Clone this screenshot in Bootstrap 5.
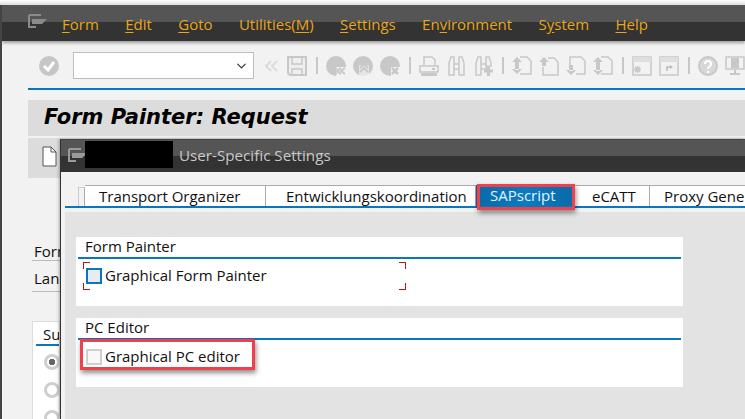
<!DOCTYPE html>
<html lang="en">
<head>
<meta charset="utf-8">
<title>Form Painter: Request</title>
<link href="https://cdn.jsdelivr.net/npm/bootstrap@5.3.0/dist/css/bootstrap.min.css" rel="stylesheet">
<style>
html,body{margin:0;height:100%;background:#fff;overflow:hidden}
body{font-family:"Open Sans","Noto Sans",sans-serif;font-size:15px;color:#111;line-height:1.2}
.desk{position:relative;width:745px;height:419px;overflow:hidden;background:#f2f2f2;padding-top:5px}
.desk-edge{position:absolute;left:0;top:5px;width:2px;height:414px;background:#444}
.desk-top{position:absolute;left:0;top:0;width:745px;height:5px;background:linear-gradient(#fff,#ddd)}
.sap-title{height:36px;background:linear-gradient(#555 0,#555 48%,#333 48%,#333 100%);box-shadow:0 2px 3px rgba(0,0,0,.35);padding-left:26px;margin-left:2px}
.sap-menu{gap:26.4px;color:#e8a61c;margin-left:15px;padding-top:1px}
.sap-menu u{text-underline-offset:2px}
.win-ico{width:19px;height:14px;margin-top:-4px;flex:none}
.tool-row{height:47px;padding-left:39px;padding-top:2px}
.tool-row svg{flex:none;display:block}
.tool-select.form-select{width:181px;height:27px;border-radius:0;border:1px solid #bdbdbd;padding:0;background-position:right 5px center;background-size:13px 10px;margin:0 11px 0 14px;box-shadow:none}
.tool-sep{width:2px;height:17px;background:#c8c8c8;flex:none;margin:0 8px 0 9px}
.blue-rule{height:2px;background:#0a77bd;margin-left:28px}
.page-head{height:36px;margin:10px 0 0 28px;background:#dcdcdc;padding-left:16px;font:italic 700 21px "DejaVu Sans",sans-serif;color:#000;line-height:34px}
.page-tools{height:40px;margin:2px 0 0 28px;background:#dcdcdc;padding:8px 0 0 14px}
.field-lab{margin-left:32px;width:28px;overflow:hidden;white-space:nowrap;border-bottom:1px solid #bbb;padding-left:2px}
.sub-panel{margin:29px 0 0 32px;width:28px;height:100px;background:#fff;overflow:hidden;padding:3px 0 0 3px;border:1px solid #ddd}
.sub-panel div.sub-lab{border-bottom:2px solid #0a77bd;white-space:nowrap;height:21px;padding-left:7px}
.radio-dot{display:block;width:16px;height:16px;border-radius:50%;border:3px solid #cfcfcf;background:#fff;margin:0 0 12px 8px}
.radio-on{background:radial-gradient(circle,#666 0,#666 3px,#fff 3.5px)}
.sap-dialog{position:absolute;left:60px;top:139px;width:685px;height:280px;background:#f2f2f2;border-left:1px solid #333;box-shadow:-1px 0 3px rgba(0,0,0,.3)}
.dlg-title{height:33px;background:linear-gradient(#555 0,#555 50%,#333 50%,#333 100%);border-top:1px solid #444;color:#c9c9c9;font-size:15.2px;padding-left:7px;padding-bottom:2px}
.mask-block{width:88px;height:27px;background:#000;margin:-1px 6px 0 -2px;flex:none}
.dlg-tabs{height:38px;padding:13px 0 0 17px}
.tab-strip.nav{flex-wrap:nowrap;height:23px;border-bottom:2px solid #0a77bd;margin-left:-13px;padding-left:13px;white-space:nowrap;width:684px;overflow:hidden}
.tab-item{height:21px;background:#fff;border-top:1px solid #aaa;border-right:1px solid #aaa;color:#111;font-size:15px;line-height:20px;flex:none}
.tab-stack{width:7px;border-top:1px solid #ccc;background:transparent;border-left:1px solid #ccc;border-right:1px solid #aaa;margin-top:2px;height:19px}
.tab-a{width:181px;padding-left:14px}
.tab-b{width:210px;padding-left:20px}
.tab-c{width:99px;padding-left:14px;background:linear-gradient(90deg,#0a6aa8,#0a7cc0 50%,#0a6aa8);color:#e6f2fa;border:0;height:23px;margin-top:-1px;line-height:23px}
.tab-d{width:75px;padding-left:17px}
.tab-e{width:100px;padding-left:14px;border-right:0}
.dlg-body{position:relative;background:#e3e3e3;margin:2px 0 0 4px;height:207px;padding:25px 0 0 11px}
.grp-box{position:relative;width:607px;height:69px;background:#fff;margin-bottom:12px;padding:2px 2px 0}
.grp-head{height:20px;border-bottom:2px solid #0a77bd;padding-left:7px;line-height:15px;font-size:15px}
.grp-line{padding:8px 0 0 8px;line-height:17px;font-size:15px}
.chk{width:16px;height:16px;flex:none;background:#f8f8f8;border:2px solid #cfcfcf;margin-right:3px}
.chk-focus{background:#e8ecf0;border-color:#0a77bd}
.crop{position:absolute;width:7px;height:7px;border:0 solid #c4121a}
.crop-tl{left:7px;top:25px;border-top-width:1px;border-left-width:1px}
.crop-tr{left:323px;top:25px;border-top-width:1px;border-right-width:1px}
.crop-bl{left:7px;top:46px;border-bottom-width:1px;border-left-width:1px}
.crop-br{left:323px;top:46px;border-bottom-width:1px;border-right-width:1px}
.hilite{position:absolute;border:3px solid #f0404c;box-shadow:1px 3px 5px rgba(0,0,0,.45);pointer-events:none}
.hilite-tab{left:416px;top:45px;width:98px;height:26px}
.hilite-pc{left:19px;top:200px;width:175px;height:31px}
</style>
</head>
<body>
<svg width="0" height="0" class="position-absolute">
<defs>
<symbol id="i-win" viewBox="0 0 19 14"><path d="M1 1h12M1 1v12h7M1 13" fill="none" stroke="currentColor" stroke-width="2"/><path d="M4 5h15l-5 5H4z" fill="currentColor"/></symbol>
</defs>
</svg>
<div class="desk">
  <div class="desk-top"></div>
  <div class="desk-edge"></div>
  <div class="sap-title d-flex align-items-center">
    <svg class="win-ico" width="19" height="14" style="color:#8a8a8a"><use href="#i-win"/></svg>
    <div class="sap-menu d-flex">
      <span><u>F</u>orm</span><span><u>E</u>dit</span><span><u>G</u>oto</span><span>Utilities(<u>M</u>)</span><span><u>S</u>ettings</span><span>En<u>v</u>ironment</span><span>S<u>y</u>stem</span><span><u>H</u>elp</span>
    </div>
  </div>
  <div class="tool-row d-flex align-items-center">
    <svg width="20" height="20" viewBox="0 0 20 20"><circle cx="10" cy="10" r="10" fill="#c6c6c6"/><path d="M5 10l4 4 6-8" fill="none" stroke="#fff" stroke-width="3"/></svg>
    <select class="form-select tool-select" aria-label="Command"><option></option></select>
    <svg width="13" height="12" viewBox="0 0 13 12" style="margin-right:9px"><path d="M6 1L1 6l5 5M12 1L7 6l5 5" fill="none" stroke="#dcdcdc" stroke-width="2"/></svg>
    <svg width="20" height="20" viewBox="0 0 20 20"><path d="M1 1h18v18H3l-2-2z" fill="#efefef" stroke="#c8c8c8" stroke-width="2"/><path d="M5 2v6h10V2M5 19v-6h10v6" fill="none" stroke="#c8c8c8" stroke-width="1.500"/></svg>
    <i class="tool-sep"></i>
    <svg width="20" height="20" viewBox="0 0 20 20"><circle cx="10" cy="10" r="10" fill="#c8c8c8"/><path d="M10 11h10v9H10z" fill="#f2f2f2"/><path d="M11 12l-4 3 4 3M15 12l-4 3 4 3M19 12l-4 3 4 3" fill="none" stroke="#c8c8c8" stroke-width="2"/></svg>
    <svg width="20" height="20" viewBox="0 0 20 20" style="margin-left:7px"><circle cx="10" cy="10" r="10" fill="#c8c8c8"/><path d="M6 9h10v11H6z" fill="#f2f2f2" opacity=".7"/><path d="M7 12l4-4 4 4M7 16l4-4 4 4" fill="none" stroke="#c8c8c8" stroke-width="2"/></svg>
    <svg width="20" height="20" viewBox="0 0 20 20" style="margin-left:7px"><circle cx="10" cy="10" r="10" fill="#c8c8c8"/><path d="M11 11h9v9h-9z" fill="#f2f2f2"/><path d="M12 12l6 6M18 12l-6 6" fill="none" stroke="#c8c8c8" stroke-width="2.500"/></svg>
    <i class="tool-sep"></i>
    <svg width="20" height="20" viewBox="0 0 20 20"><path d="M5 9V1h8l3 3v5" fill="#f2f2f2" stroke="#c8c8c8" stroke-width="1.500"/><path d="M1 10h18v6H1z" fill="#f2f2f2" stroke="#c8c8c8" stroke-width="1.500"/><path d="M2 18.500h16" stroke="#c8c8c8" stroke-width="3"/><path d="M13 13h3" stroke="#c8c8c8" stroke-width="2"/></svg>
    <svg width="19" height="20" viewBox="0 0 19 20" style="margin-left:8px"><path d="M2 19V7l2-6h3v18zM12 19V1h3l2 6v12zM7 8h5v5H7z" fill="#f2f2f2" stroke="#c8c8c8" stroke-width="1.500"/></svg>
    <svg width="19" height="20" viewBox="0 0 19 20" style="margin-left:8px"><path d="M2 19V7l2-6h3v18zM12 10V1h3l2 6v3zM7 8h5v5H7z" fill="#f2f2f2" stroke="#c8c8c8" stroke-width="1.500"/><path d="M10 15h9M14.500 11v9" stroke="#c8c8c8" stroke-width="3"/></svg>
    <i class="tool-sep"></i>
    <svg width="20" height="20" viewBox="0 0 20 20"><path d="M8 1h7l4 4v13H8" fill="#f2f2f2" stroke="#c8c8c8" stroke-width="1.500"/><path d="M0 6l5-5 5 5zM0 13l5 5 5-5zM3 5h4v9H3z" fill="#c8c8c8"/></svg>
    <svg width="20" height="20" viewBox="0 0 20 20" style="margin-left:7px"><path d="M9 2h6l4 4v13H4v-8" fill="#f2f2f2" stroke="#c8c8c8" stroke-width="1.500"/><path d="M0 6l5-5 5 5zM3 5h4v5H3z" fill="#c8c8c8"/></svg>
    <svg width="20" height="20" viewBox="0 0 20 20" style="margin-left:7px"><path d="M4 9V1h11l4 4v13h-9" fill="#f2f2f2" stroke="#c8c8c8" stroke-width="1.500"/><path d="M0 14l5 5 5-5zM3 9h4v6H3z" fill="#c8c8c8"/></svg>
    <svg width="20" height="20" viewBox="0 0 20 20" style="margin-left:7px"><path d="M8 1h7l4 4v13H8" fill="#f2f2f2" stroke="#c8c8c8" stroke-width="1.500"/><path d="M0 6l5-5 5 5zM0 14l5 5 5-5zM3 5h4v10H3z" fill="#c8c8c8"/></svg>
    <i class="tool-sep"></i>
    <svg width="20" height="20" viewBox="0 0 20 20"><path d="M1 1h18v18H1z" fill="#f2f2f2" stroke="#c8c8c8" stroke-width="1.500"/><path d="M1 1h18v5H1z" fill="#dedede"/><path d="M3 11l5 5M8 11l-5 5M5.500 10v7M2 13.500h7" stroke="#c8c8c8" stroke-width="1.500"/></svg>
    <svg width="20" height="20" viewBox="0 0 20 20" style="margin-left:7px"><path d="M1 1h18v18H1z" fill="#f2f2f2" stroke="#c8c8c8" stroke-width="1.500"/><path d="M1 1h18v5H1z" fill="#dedede"/><path d="M8 15v-4h3" fill="none" stroke="#bbb" stroke-width="1.500"/><path d="M11 9l3 2-3 2z" fill="#bbb"/></svg>
    <i class="tool-sep"></i>
    <svg width="20" height="20" viewBox="0 0 20 20"><circle cx="10" cy="10" r="9" fill="#d8d8d8" stroke="#c8c8c8" stroke-width="2"/><path d="M7 8c0-4 6-4 6 0 0 3-3 2-3 5" fill="none" stroke="#fff" stroke-width="2"/><path d="M9 15h2v2H9z" fill="#fff"/></svg>
    <svg width="20" height="20" viewBox="0 0 20 20" style="margin-left:7px"><path d="M1 1h18v12H1z" fill="#f2f2f2" stroke="#c8c8c8" stroke-width="1.500"/><path d="M6 2h8v10H6z" fill="#c8c8c8"/><path d="M9 14h2v3H9zM5 17h10v2H5z" fill="#c8c8c8"/></svg>
  </div>
  <div class="blue-rule"></div>
  <div class="page-head">Form Painter: Request</div>
  <div class="page-tools">
    <svg width="15" height="21" viewBox="0 0 15 21" class="d-block"><path d="M1 1h8l5 5v14H1z" fill="#fff" stroke="#555"/><path d="M9 1v5h5" fill="none" stroke="#555"/></svg>
  </div>
  <div class="field-lab mt-5 pt-3">Form</div>
  <div class="field-lab pt-2 pb-1">Lan</div>
  <div class="sub-panel">
    <div class="sub-lab">Su</div>
    <span class="radio-dot radio-on mt-2"></span>
    <span class="radio-dot"></span>
    <span class="radio-dot"></span>
  </div>
  <div class="sap-dialog">
    <div class="dlg-title d-flex align-items-center">
      <svg class="win-ico" width="19" height="14" style="color:#9a9a9a;margin-top:-1px"><use href="#i-win"/></svg>
      <div class="mask-block"></div>
      <span>User-Specific Settings</span>
    </div>
    <div class="dlg-tabs">
      <ul class="nav tab-strip list-unstyled mb-0">
        <li class="tab-item tab-stack"></li>
        <li class="tab-item tab-a">Transport Organizer</li>
        <li class="tab-item tab-b">Entwicklungskoordination</li>
        <li class="tab-item tab-c">SAPscript</li>
        <li class="tab-item tab-d">eCATT</li>
        <li class="tab-item tab-e">Proxy Gene</li>
      </ul>
    </div>
    <div class="dlg-body">
      <section class="grp-box">
        <div class="grp-head">Form Painter</div>
        <div class="grp-line d-flex align-items-center"><span class="chk chk-focus"></span>Graphical Form Painter</div>
        <i class="crop crop-tl"></i><i class="crop crop-tr"></i><i class="crop crop-bl"></i><i class="crop crop-br"></i>
      </section>
      <section class="grp-box">
        <div class="grp-head">PC Editor</div>
        <div class="grp-line d-flex align-items-center"><span class="chk"></span>Graphical PC editor</div>
      </section>
    </div>
    <div class="hilite hilite-tab"></div>
    <div class="hilite hilite-pc"></div>
  </div>
</div>
<script src="https://cdn.jsdelivr.net/npm/bootstrap@5.3.0/dist/js/bootstrap.bundle.min.js"></script>
</body>
</html>
